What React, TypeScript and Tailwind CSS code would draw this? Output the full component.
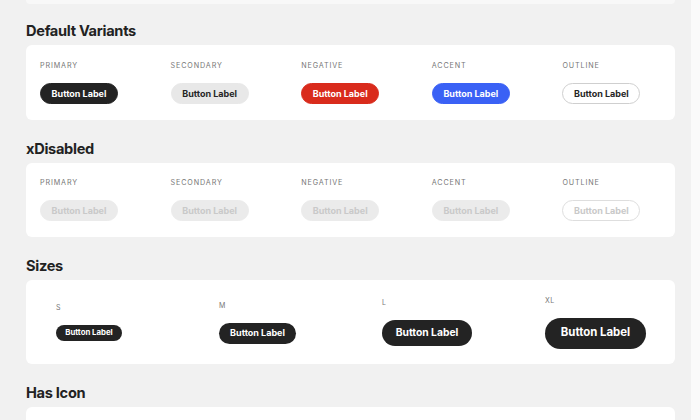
import type { ReactNode } from "react";

type Variant = "primary" | "secondary" | "negative" | "accent" | "outline";

const variantClass: Record<Variant, string> = {
  primary: "bg-[#232323] text-white border-[#232323]",
  secondary: "bg-[#e8e8e8] text-[#262626] border-[#e8e8e8]",
  negative: "bg-[#d92b1c] text-white border-[#d92b1c]",
  accent: "bg-[#3a61f5] text-white border-[#3a61f5]",
  outline: "bg-white text-[#262626] border-[#cfcfcf]",
};

const disabledClass: Record<Variant, string> = {
  primary: "bg-[#ebebeb] text-[#c9c9c9] border-[#ebebeb]",
  secondary: "bg-[#ebebeb] text-[#c9c9c9] border-[#ebebeb]",
  negative: "bg-[#ebebeb] text-[#c9c9c9] border-[#ebebeb]",
  accent: "bg-[#ebebeb] text-[#c9c9c9] border-[#ebebeb]",
  outline: "bg-white text-[#c9c9c9] border-[#dedede]",
};

const variants: { key: Variant; label: string }[] = [
  { key: "primary", label: "PRIMARY" },
  { key: "secondary", label: "SECONDARY" },
  { key: "negative", label: "NEGATIVE" },
  { key: "accent", label: "ACCENT" },
  { key: "outline", label: "OUTLINE" },
];

const sizes = [
  { label: "S", className: "h-[16px] w-[66px] text-[7.8px]" },
  { label: "M", className: "h-[21px] w-[77px] text-[9px]" },
  { label: "L", className: "h-[26px] w-[90px] text-[10.3px]" },
  { label: "XL", className: "h-[31px] w-[101px] text-[11.4px]" },
];

function Section({ title, children }: { title: string; children: ReactNode }) {
  return (
    <section className="mt-[19px]">
      <h2 className="mb-[4px] h-5 text-[14.6px] font-bold leading-5 tracking-[-0.3px] text-[#222]">
        {title}
      </h2>
      {children}
    </section>
  );
}

function Caption({ children }: { children: ReactNode }) {
  return (
    <div className="mb-3 text-[7.2px] leading-[10px] tracking-[0.12em] text-[#777]">{children}</div>
  );
}

function VariantRow({ disabled }: { disabled?: boolean }) {
  return (
    <div
      className={`grid grid-cols-5 gap-8 rounded-md bg-white px-[14px] pb-4 ${
        disabled ? "pt-[15px]" : "pt-4"
      }`}
    >
      {variants.map((v) => (
        <div key={v.key}>
          <Caption>{v.label}</Caption>
          <button
            disabled={disabled}
            className={`flex h-[21px] w-[78px] items-center justify-center rounded-full border text-[9px] font-bold ${
              disabled ? disabledClass[v.key] : variantClass[v.key]
            }`}
          >
            Button Label
          </button>
        </div>
      ))}
    </div>
  );
}

export default function App() {
  return (
    <div className="flex h-[420px] w-[700px] overflow-hidden font-['Inter','Liberation_Sans',sans-serif]">
      <main className="flex-1 bg-[#f1f1f1] pl-[26px]">
        <div className="w-[649px]">
          <div className="h-[4px] rounded-b-md bg-[#f8f8f8]" />

          <div className="-mt-[2px]">
            <Section title="Default Variants">
              <VariantRow />
            </Section>
          </div>

          <Section title="xDisabled">
            <VariantRow disabled />
          </Section>

          <Section title="Sizes">
            <div className="grid h-[84px] grid-cols-[repeat(4,163px)] items-center rounded-md bg-white pl-[30px]">
              {sizes.map((s) => (
                <div key={s.label}>
                  <div className="mb-3 text-[7px] leading-[10px] tracking-[0.08em] text-[#777]">
                    {s.label}
                  </div>
                  <button
                    className={`flex items-center justify-center rounded-full bg-[#232323] font-bold text-white ${s.className}`}
                  >
                    Button Label
                  </button>
                </div>
              ))}
            </div>
          </Section>

          <Section title="Has Icon">
            <div className="h-[80px] rounded-md bg-white" />
          </Section>
        </div>
      </main>
      <aside className="w-[9px] bg-[#fafafa]" />
    </div>
  );
}
